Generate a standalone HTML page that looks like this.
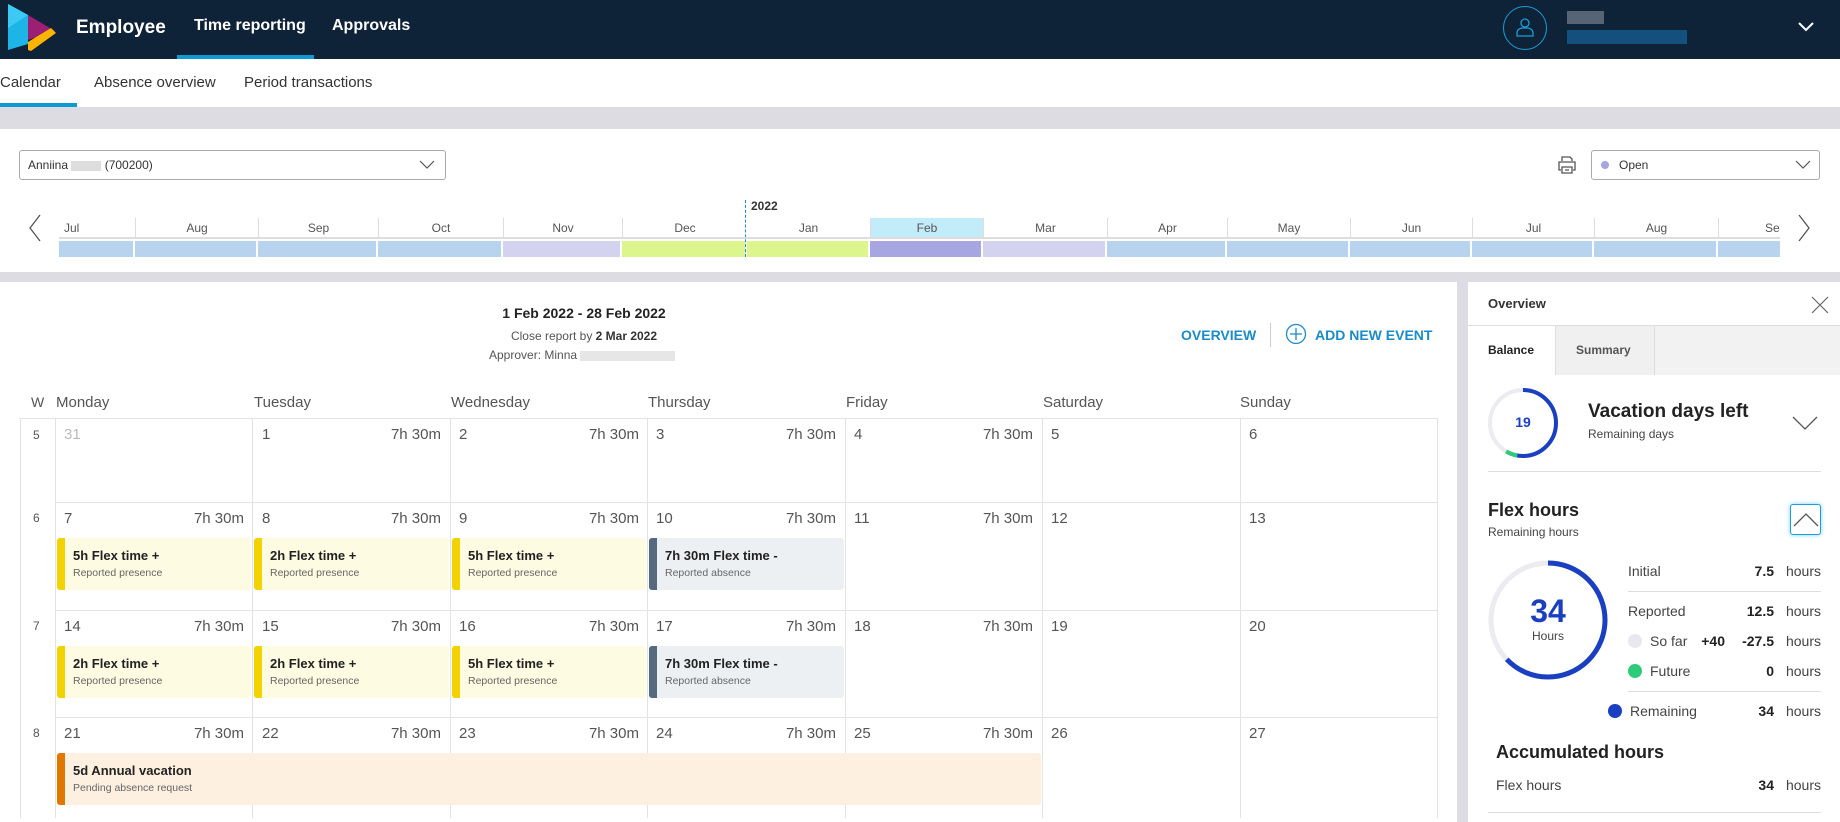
<!DOCTYPE html>
<html><head><meta charset="utf-8"><style>
*{box-sizing:border-box;margin:0;padding:0}
body{width:1840px;height:814px;overflow:hidden;background:#dcdce2;font-family:"Liberation Sans",sans-serif;color:#333;position:relative}
.a{position:absolute}
.hdr{left:0;top:0;width:1840px;height:59px;background:#0e2238}
.sub{left:0;top:59px;width:1840px;height:48px;background:#fff}
.sub span{position:absolute;top:15px;font-size:15px;color:#333}
.top{left:0;top:129px;width:1840px;height:143px;background:#fff}
.mh{position:absolute;top:218px;height:21px;font-size:12px;color:#555;text-align:center;line-height:21px;border-left:1px solid #ddd;border-bottom:2px solid #ddd}
.mb{position:absolute;top:241px;height:16px}
.main{left:0;top:282px;width:1457px;height:540px;background:#fff}
.rp{left:1468px;top:282px;width:372px;height:540px;background:#fff}
.dh{position:absolute;top:394px;font-size:15px;color:#555}
.vl{position:absolute;top:418px;width:1px;height:400px;background:#e3e3e3}
.hl{position:absolute;left:55px;width:1382px;height:1px;background:#e3e3e3}
.dn{position:absolute;font-size:15px;color:#555}
.tm{position:absolute;font-size:15px;color:#555;text-align:right;width:80px}
.wk{position:absolute;left:33px;font-size:12px;color:#555}
.ev{position:absolute;height:52px;border-radius:3px;overflow:hidden}
.ev b{position:absolute;left:16px;top:10px;font-size:13px;color:#222}
.ev i{position:absolute;left:16px;top:29px;font-size:10.5px;font-style:normal;color:#666}
.ev:before{content:"";position:absolute;left:0;top:0;bottom:0;width:8px;background:var(--c)}
.y{background:#fdfbe2;--c:#f2d200}.g{background:#edf0f3;--c:#566a7e}.o{background:#fdf0e0;--c:#e07800}
.row{position:absolute;left:1628px;width:193px;font-size:14px;color:#444}
.row .v{position:absolute;right:47px;font-weight:bold;color:#222}
.row .h{position:absolute;right:0}
</style></head><body>
<div class="a hdr">
<svg class="a" style="left:0;top:0" width="60" height="59"><polygon points="8,4 28,15 28,44 8,50" fill="#1cb5e6"/><polygon points="8,4 28,15 8,28" fill="#3ccaf5"/><polygon points="28,15 55,31 28,40" fill="#9a1f75"/><polygon points="28,42 51,28 56,33 31,51 28,50" fill="#fbb500"/></svg>
<div class="a" style="left:76px;top:17px;font-size:19px;font-weight:bold;color:#fff">Employee</div>
<div class="a" style="left:194px;top:17px;font-size:16px;font-weight:bold;color:#fff">Time reporting</div>
<div class="a" style="left:177px;top:55px;width:137px;height:4px;background:#0f9ad6"></div>
<div class="a" style="left:332px;top:17px;font-size:16px;font-weight:bold;color:#fff">Approvals</div>
<div class="a" style="left:1503px;top:6px;width:44px;height:44px;border:1.5px solid #1a9ed8;border-radius:50%"></div>
<svg class="a" style="left:1514px;top:16px" width="22" height="22"><circle cx="11" cy="7" r="4" fill="none" stroke="#1a9ed8" stroke-width="1.3"/><path d="M3 20 v-3 q0-4 5-5 h6 q5 1 5 5 v3z" fill="none" stroke="#1a9ed8" stroke-width="1.3"/></svg>
<div class="a" style="left:1567px;top:11px;width:37px;height:13px;background:#6a7585;opacity:.8"></div>
<div class="a" style="left:1567px;top:30px;width:120px;height:14px;background:#14507e"></div>
<svg class="a" style="left:1797px;top:21px" width="18" height="12"><path d="M2 2 L9 9 L16 2" fill="none" stroke="#fff" stroke-width="2"/></svg>
</div>
<div class="a sub">
<span style="left:0">Calendar</span><span style="left:94px">Absence overview</span><span style="left:244px">Period transactions</span>
<div class="a" style="left:0;top:44px;width:77px;height:4px;background:#0f9ad6"></div>
</div>
<div class="a top"></div>
<div class="a" style="left:19px;top:150px;width:427px;height:30px;border:1px solid #aaa;border-radius:3px;background:#fff;font-size:12px;line-height:28px;padding-left:8px;color:#333">Anniina <span style="display:inline-block;width:30px;height:10px;background:#ddd;vertical-align:middle"></span> (700200)
<svg class="a" style="right:10px;top:9px" width="16" height="10"><path d="M1 1 L8 8 L15 1" fill="none" stroke="#555" stroke-width="1.2"/></svg></div>
<svg class="a" style="left:1557px;top:155px" width="20" height="20"><path d="M5 6 V2 H13 L15 4 V6 M4 15 H2 V7 H18 V15 H16 M5 12 H15 V18 H5Z M8 15 H12" fill="none" stroke="#555" stroke-width="1.3"/></svg>
<div class="a" style="left:1591px;top:150px;width:229px;height:30px;border:1px solid #aaa;border-radius:3px;background:#fff;font-size:12px;line-height:28px;padding-left:27px;color:#333">Open<span class="a" style="left:9px;top:10px;width:8px;height:8px;border-radius:50%;background:#a6a4e2"></span>
<svg class="a" style="right:8px;top:9px" width="16" height="10"><path d="M1 1 L8 8 L15 1" fill="none" stroke="#555" stroke-width="1.2"/></svg></div>
<svg class="a" style="left:28px;top:213px" width="14" height="30"><path d="M12 2 L2 15 L12 28" fill="none" stroke="#555" stroke-width="1.3"/></svg>
<svg class="a" style="left:1797px;top:213px" width="14" height="30"><path d="M2 2 L12 15 L2 28" fill="none" stroke="#555" stroke-width="1.3"/></svg>
<div class="a" style="left:751px;top:199px;font-size:12px;font-weight:bold;color:#333">2022</div>
<div class="a" style="left:745px;top:200px;height:57px;border-left:1px dashed #1a8cc8"></div>
<div class="mh" style="left:59px;width:76px;border-left:none;text-align:left;padding-left:5px">Jul</div><div class="mb" style="left:59px;width:74px;background:#b8d3ee"></div>
<div class="mh" style="left:135px;width:123px">Aug</div><div class="mb" style="left:135px;width:121px;background:#b8d3ee"></div>
<div class="mh" style="left:258px;width:120px">Sep</div><div class="mb" style="left:258px;width:118px;background:#b8d3ee"></div>
<div class="mh" style="left:378px;width:125px">Oct</div><div class="mb" style="left:378px;width:123px;background:#b8d3ee"></div>
<div class="mh" style="left:503px;width:119px">Nov</div><div class="mb" style="left:503px;width:117px;background:#d3d3f0"></div>
<div class="mh" style="left:622px;width:125px">Dec</div><div class="mb" style="left:622px;width:123px;background:#dcf58c"></div>
<div class="mh" style="left:747px;width:123px;border-left:none">Jan</div><div class="mb" style="left:747px;width:121px;background:#dcf58c"></div>
<div class="mh" style="left:870px;width:113px;background:#c3ecfb">Feb</div><div class="mb" style="left:870px;width:111px;background:#a8a6e0"></div>
<div class="mh" style="left:983px;width:124px">Mar</div><div class="mb" style="left:983px;width:122px;background:#d3d3f0"></div>
<div class="mh" style="left:1107px;width:120px">Apr</div><div class="mb" style="left:1107px;width:118px;background:#b8d3ee"></div>
<div class="mh" style="left:1227px;width:123px">May</div><div class="mb" style="left:1227px;width:121px;background:#b8d3ee"></div>
<div class="mh" style="left:1350px;width:122px">Jun</div><div class="mb" style="left:1350px;width:120px;background:#b8d3ee"></div>
<div class="mh" style="left:1472px;width:122px">Jul</div><div class="mb" style="left:1472px;width:120px;background:#b8d3ee"></div>
<div class="mh" style="left:1594px;width:124px">Aug</div><div class="mb" style="left:1594px;width:122px;background:#b8d3ee"></div>
<div class="mh" style="left:1718px;width:62px;overflow:hidden;text-align:left;padding-left:46px">Se</div><div class="mb" style="left:1718px;width:62px;background:#b8d3ee"></div>

<div class="a main"></div>
<div class="a" style="left:0;top:305px;width:1168px;text-align:center;font-size:14px;font-weight:bold;color:#222">1 Feb 2022 - 28 Feb 2022</div>
<div class="a" style="left:0;top:329px;width:1168px;text-align:center;font-size:12px;color:#555">Close report by <b style="color:#333">2 Mar 2022</b></div>
<div class="a" style="left:489px;top:348px;font-size:12px;color:#555">Approver: Minna <span style="display:inline-block;width:95px;height:10px;background:#e6e6e6;vertical-align:middle"></span></div>
<div class="a" style="left:1181px;top:327px;font-size:14px;font-weight:bold;color:#1a8cc8">OVERVIEW</div>
<div class="a" style="left:1270px;top:323px;width:1px;height:24px;background:#ccc"></div>
<svg class="a" style="left:1285px;top:323px" width="22" height="22"><circle cx="11" cy="11" r="9.5" fill="none" stroke="#1a8cc8" stroke-width="1.3"/><path d="M11 5 V17 M5 11 H17" stroke="#1a8cc8" stroke-width="1.3"/></svg>
<div class="a" style="left:1315px;top:327px;font-size:14px;font-weight:bold;color:#1a8cc8">ADD NEW EVENT</div>

<div class="a" style="left:31px;top:394px;font-size:14px;color:#555">W</div>
<div class="dh" style="left:56px">Monday</div><div class="dh" style="left:254px">Tuesday</div><div class="dh" style="left:451px">Wednesday</div><div class="dh" style="left:648px">Thursday</div><div class="dh" style="left:846px">Friday</div><div class="dh" style="left:1043px">Saturday</div><div class="dh" style="left:1240px">Sunday</div>
<div class="a" style="left:20px;top:418px;width:1417px;height:1px;background:#e3e3e3"></div>
<div class="vl" style="left:20px"></div><div class="vl" style="left:55px"></div><div class="vl" style="left:252px"></div><div class="vl" style="left:450px"></div><div class="vl" style="left:647px"></div><div class="vl" style="left:845px"></div><div class="vl" style="left:1042px"></div><div class="vl" style="left:1240px"></div><div class="vl" style="left:1437px"></div>
<div class="hl" style="top:502px"></div><div class="hl" style="top:610px"></div><div class="hl" style="top:717px"></div>
<div class="wk" style="top:428px">5</div><div class="wk" style="top:511px">6</div><div class="wk" style="top:619px">7</div><div class="wk" style="top:726px">8</div>

<div class="dn" style="left:64px;top:426px;color:#bbb">31</div>
<div class="dn" style="left:262px;top:426px">1</div><div class="tm" style="left:361px;top:426px">7h 30m</div>
<div class="dn" style="left:459px;top:426px">2</div><div class="tm" style="left:559px;top:426px">7h 30m</div>
<div class="dn" style="left:656px;top:426px">3</div><div class="tm" style="left:756px;top:426px">7h 30m</div>
<div class="dn" style="left:854px;top:426px">4</div><div class="tm" style="left:953px;top:426px">7h 30m</div>
<div class="dn" style="left:1051px;top:426px">5</div><div class="dn" style="left:1249px;top:426px">6</div>

<div class="dn" style="left:64px;top:510px">7</div><div class="tm" style="left:164px;top:510px">7h 30m</div>
<div class="dn" style="left:262px;top:510px">8</div><div class="tm" style="left:361px;top:510px">7h 30m</div>
<div class="dn" style="left:459px;top:510px">9</div><div class="tm" style="left:559px;top:510px">7h 30m</div>
<div class="dn" style="left:656px;top:510px">10</div><div class="tm" style="left:756px;top:510px">7h 30m</div>
<div class="dn" style="left:854px;top:510px">11</div><div class="tm" style="left:953px;top:510px">7h 30m</div>
<div class="dn" style="left:1051px;top:510px">12</div><div class="dn" style="left:1249px;top:510px">13</div>
<div class="ev y" style="left:57px;top:538px;width:194px"><b>5h Flex time +</b><i>Reported presence</i></div>
<div class="ev y" style="left:254px;top:538px;width:195px"><b>2h Flex time +</b><i>Reported presence</i></div>
<div class="ev y" style="left:452px;top:538px;width:194px"><b>5h Flex time +</b><i>Reported presence</i></div>
<div class="ev g" style="left:649px;top:538px;width:195px"><b>7h 30m Flex time -</b><i>Reported absence</i></div>

<div class="dn" style="left:64px;top:618px">14</div><div class="tm" style="left:164px;top:618px">7h 30m</div>
<div class="dn" style="left:262px;top:618px">15</div><div class="tm" style="left:361px;top:618px">7h 30m</div>
<div class="dn" style="left:459px;top:618px">16</div><div class="tm" style="left:559px;top:618px">7h 30m</div>
<div class="dn" style="left:656px;top:618px">17</div><div class="tm" style="left:756px;top:618px">7h 30m</div>
<div class="dn" style="left:854px;top:618px">18</div><div class="tm" style="left:953px;top:618px">7h 30m</div>
<div class="dn" style="left:1051px;top:618px">19</div><div class="dn" style="left:1249px;top:618px">20</div>
<div class="ev y" style="left:57px;top:646px;width:194px"><b>2h Flex time +</b><i>Reported presence</i></div>
<div class="ev y" style="left:254px;top:646px;width:195px"><b>2h Flex time +</b><i>Reported presence</i></div>
<div class="ev y" style="left:452px;top:646px;width:194px"><b>5h Flex time +</b><i>Reported presence</i></div>
<div class="ev g" style="left:649px;top:646px;width:195px"><b>7h 30m Flex time -</b><i>Reported absence</i></div>

<div class="dn" style="left:64px;top:725px">21</div><div class="tm" style="left:164px;top:725px">7h 30m</div>
<div class="dn" style="left:262px;top:725px">22</div><div class="tm" style="left:361px;top:725px">7h 30m</div>
<div class="dn" style="left:459px;top:725px">23</div><div class="tm" style="left:559px;top:725px">7h 30m</div>
<div class="dn" style="left:656px;top:725px">24</div><div class="tm" style="left:756px;top:725px">7h 30m</div>
<div class="dn" style="left:854px;top:725px">25</div><div class="tm" style="left:953px;top:725px">7h 30m</div>
<div class="dn" style="left:1051px;top:725px">26</div><div class="dn" style="left:1249px;top:725px">27</div>
<div class="ev o" style="left:57px;top:753px;width:984px"><b>5d Annual vacation</b><i>Pending absence request</i></div>

<div class="a rp"></div>
<div class="a" style="left:1488px;top:296px;font-size:13px;font-weight:bold;color:#333">Overview</div>
<svg class="a" style="left:1811px;top:296px" width="18" height="18"><path d="M1 1 L17 17 M17 1 L1 17" stroke="#666" stroke-width="1.2"/></svg>
<div class="a" style="left:1468px;top:325px;width:372px;height:1px;background:#ddd"></div>
<div class="a" style="left:1555px;top:326px;width:285px;height:49px;background:#f2f2f2"></div>
<div class="a" style="left:1555px;top:326px;width:100px;height:49px;border-left:1px solid #ddd;border-right:1px solid #ddd;background:#f0f0f0"></div>
<div class="a" style="left:1488px;top:343px;font-size:12px;font-weight:bold;color:#222">Balance</div>
<div class="a" style="left:1576px;top:343px;font-size:12px;font-weight:bold;color:#555">Summary</div>
<svg class="a" style="left:1487px;top:387px" width="72" height="72"><circle cx="36" cy="36" r="33" fill="none" stroke="#ebebf0" stroke-width="4"/><circle cx="36" cy="36" r="33" fill="none" stroke="#1a3fc0" stroke-width="4" stroke-dasharray="120 300" transform="rotate(-90 36 36)"/><circle cx="36" cy="36" r="33" fill="none" stroke="#2ecc7a" stroke-width="4" stroke-dasharray="12 300" transform="rotate(100 36 36)"/></svg>
<div class="a" style="left:1487px;top:414px;width:72px;text-align:center;font-size:14px;font-weight:bold;color:#1a3fc0">19</div>
<div class="a" style="left:1588px;top:401px;font-size:19px;font-weight:bold;color:#222">Vacation days left</div>
<div class="a" style="left:1588px;top:427px;font-size:12px;color:#444">Remaining days</div>
<svg class="a" style="left:1792px;top:416px" width="26" height="16"><path d="M1 1 L13 13 L25 1" fill="none" stroke="#555" stroke-width="1.3"/></svg>
<div class="a" style="left:1488px;top:471px;width:333px;height:1px;background:#ddd"></div>
<div class="a" style="left:1488px;top:500px;font-size:18px;font-weight:bold;color:#222">Flex hours</div>
<div class="a" style="left:1488px;top:525px;font-size:12px;color:#444">Remaining hours</div>
<div class="a" style="left:1790px;top:504px;width:31px;height:31px;border:1.5px solid #1a9ed8;border-radius:3px;box-shadow:0 0 5px #7fd2f5;background:#fff"></div>
<svg class="a" style="left:1793px;top:512px" width="26" height="16"><path d="M1 14 L13 2 L25 14" fill="none" stroke="#555" stroke-width="1.3"/></svg>
<svg class="a" style="left:1488px;top:560px" width="120" height="120"><circle cx="60" cy="60" r="57" fill="none" stroke="#ebebf0" stroke-width="5"/><circle cx="60" cy="60" r="57" fill="none" stroke="#1a3fc0" stroke-width="5" stroke-dasharray="225 400" transform="rotate(-90 60 60)"/></svg>
<div class="a" style="left:1488px;top:594px;width:120px;text-align:center;font-size:32px;font-weight:bold;color:#1a3fc0;line-height:34px">34</div>
<div class="a" style="left:1488px;top:629px;width:120px;text-align:center;font-size:12px;color:#444">Hours</div>
<div class="row" style="top:563px">Initial<span class="v">7.5</span><span class="h">hours</span></div>
<div class="a" style="left:1628px;top:591px;width:193px;height:1px;background:#ddd"></div>
<div class="row" style="top:603px">Reported<span class="v">12.5</span><span class="h">hours</span></div>
<div class="row" style="top:633px"><span class="a" style="left:0;top:1px;width:14px;height:14px;border-radius:50%;background:#e8e8ee"></span><span style="margin-left:22px">So far</span><span class="v" style="right:96px">+40</span><span class="v">-27.5</span><span class="h">hours</span></div>
<div class="row" style="top:663px"><span class="a" style="left:0;top:1px;width:14px;height:14px;border-radius:50%;background:#2ecc7a"></span><span style="margin-left:22px">Future</span><span class="v">0</span><span class="h">hours</span></div>
<div class="a" style="left:1628px;top:691px;width:193px;height:1px;background:#ddd"></div>
<div class="row" style="top:703px;left:1608px;width:213px"><span class="a" style="left:0;top:1px;width:14px;height:14px;border-radius:50%;background:#1a3fc0"></span><span style="margin-left:22px">Remaining</span><span class="v">34</span><span class="h">hours</span></div>
<div class="a" style="left:1496px;top:742px;font-size:18px;font-weight:bold;color:#222">Accumulated hours</div>
<div class="row" style="top:777px;left:1496px;width:325px">Flex hours<span class="v">34</span><span class="h">hours</span></div>
<div class="a" style="left:1488px;top:812px;width:333px;height:1px;background:#ddd"></div>
</body></html>
